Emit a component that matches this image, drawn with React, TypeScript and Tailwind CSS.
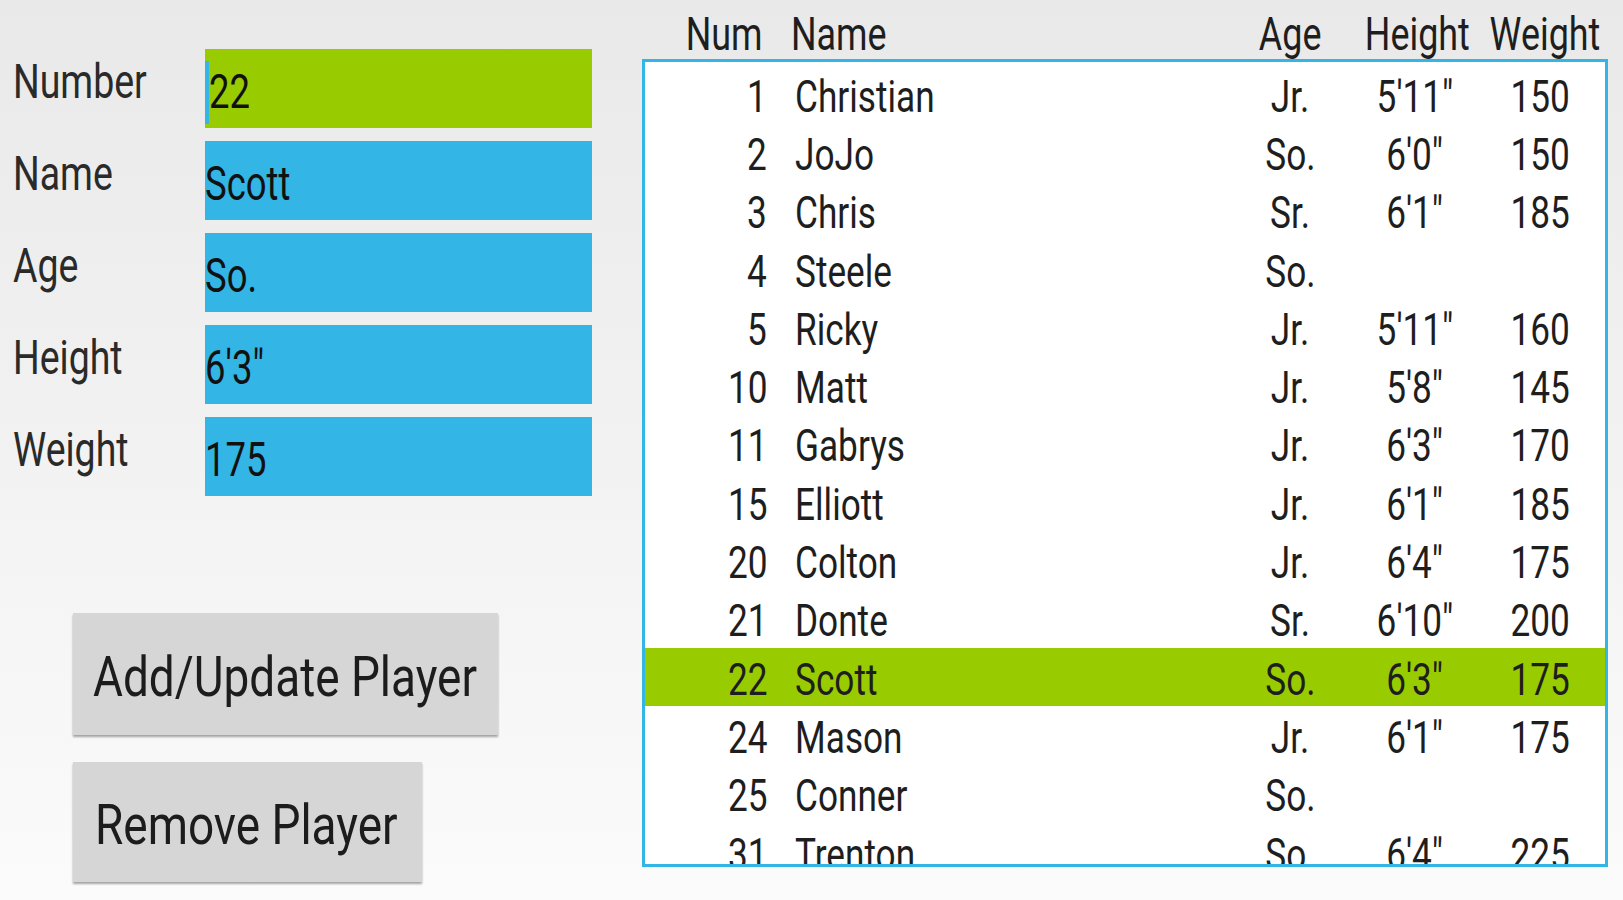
import React from "react";

type Player = { num: string; name: string; age: string; height: string; weight: string };

const players: Player[] = [
  { num: "1", name: "Christian", age: "Jr.", height: "5'11\"", weight: "150" },
  { num: "2", name: "JoJo", age: "So.", height: "6'0\"", weight: "150" },
  { num: "3", name: "Chris", age: "Sr.", height: "6'1\"", weight: "185" },
  { num: "4", name: "Steele", age: "So.", height: "", weight: "" },
  { num: "5", name: "Ricky", age: "Jr.", height: "5'11\"", weight: "160" },
  { num: "10", name: "Matt", age: "Jr.", height: "5'8\"", weight: "145" },
  { num: "11", name: "Gabrys", age: "Jr.", height: "6'3\"", weight: "170" },
  { num: "15", name: "Elliott", age: "Jr.", height: "6'1\"", weight: "185" },
  { num: "20", name: "Colton", age: "Jr.", height: "6'4\"", weight: "175" },
  { num: "21", name: "Donte", age: "Sr.", height: "6'10\"", weight: "200" },
  { num: "22", name: "Scott", age: "So.", height: "6'3\"", weight: "175" },
  { num: "24", name: "Mason", age: "Jr.", height: "6'1\"", weight: "175" },
  { num: "25", name: "Conner", age: "So.", height: "", weight: "" },
  { num: "31", name: "Trenton", age: "So.", height: "6'4\"", weight: "225" },
];

const fields = [
  { label: "Number", value: "22", active: true },
  { label: "Name", value: "Scott", active: false },
  { label: "Age", value: "So.", active: false },
  { label: "Height", value: "6'3\"", active: false },
  { label: "Weight", value: "175", active: false },
];

function Row({ p }: { p: Player }) {
  const sel = p.num === "22";
  return (
    <div
      className={`flex items-center h-[58.3px] shrink-0 whitespace-nowrap text-[44px] leading-none text-[#1e1e1e] ${
        sel ? "bg-[#99cc00]" : ""
      }`}
    >
      <div className="w-[122px] shrink-0 text-right pt-[5px]">
        <span className="inline-block origin-right scale-x-[0.8]">{p.num}</span>
      </div>
      <div className="w-[445px] shrink-0 ml-[28px] pt-[5px]">
        <span className="inline-block origin-left scale-x-[0.8]">{p.name}</span>
      </div>
      <div className="w-[100px] shrink-0 text-center pt-[5px]">
        <span className="inline-block origin-center scale-x-[0.8]">{p.age}</span>
      </div>
      <div className="w-[110px] shrink-0 ml-[20px] text-center pt-[5px]">
        <span className="inline-block origin-center scale-x-[0.8]">{p.height}</span>
      </div>
      <div className="w-[100px] shrink-0 ml-[20px] text-center pt-[5px]">
        <span className="inline-block origin-center scale-x-[0.8]">{p.weight}</span>
      </div>
    </div>
  );
}

export default function App() {
  return (
    <div className="w-[1623px] h-[900px] overflow-hidden flex bg-gradient-to-b from-[#e9e9e9] via-[#f2f2f2] to-[#fbfbfb] font-['Roboto',_'Liberation_Sans',_sans-serif]">
      {/* Left form */}
      <div className="w-[642px] shrink-0 flex flex-col pt-[49px] pl-[13px]">
        <div className="flex flex-col gap-[13px]">
          {fields.map((f) => (
            <div key={f.label} className="flex items-center h-[79px]">
              <div className="w-[192px] shrink-0 pb-[14px] text-[48px] leading-none text-[#2a2a2a] whitespace-nowrap">
                <span className="inline-block origin-left scale-x-[0.78]">{f.label}</span>
              </div>
              <div
                className={`w-[387px] h-[79px] flex items-center text-[48px] leading-none text-[#111] whitespace-nowrap ${
                  f.active ? "bg-[#99cc00]" : "bg-[#33b5e5]"
                }`}
              >
                {f.active && <div className="w-[4px] h-[63px] bg-[#33b5e5] shrink-0 mt-[8px]" />}
                <span className="inline-block origin-left scale-x-[0.76] pt-[6px]">{f.value}</span>
              </div>
            </div>
          ))}
        </div>
        <div className="ml-[60px] mt-[117px] flex flex-col items-start gap-[27px]">
          <div className="w-[425px] h-[122px] bg-[#d6d6d6] shadow-[0_2px_2px_rgba(0,0,0,0.35)] flex items-center pl-[20px] text-[56px] leading-none text-[#1c1c1c] whitespace-nowrap">
            <span className="inline-block origin-left scale-x-[0.82] pt-[6px]">Add/Update Player</span>
          </div>
          <div className="w-[349px] h-[120px] bg-[#d6d6d6] shadow-[0_2px_2px_rgba(0,0,0,0.35)] flex items-center pl-[22px] text-[56px] leading-none text-[#1c1c1c] whitespace-nowrap">
            <span className="inline-block origin-left scale-x-[0.82] pt-[6px]">Remove Player</span>
          </div>
        </div>
      </div>

      {/* Right table */}
      <div className="w-[966px] shrink-0 flex flex-col">
        <div className="h-[59px] flex items-center pl-[3px] pt-[8px] text-[46px] leading-none text-[#1e1e1e] whitespace-nowrap">
          <div className="w-[118px] shrink-0 text-right">
            <span className="inline-block origin-right scale-x-[0.78]">Num</span>
          </div>
          <div className="w-[449px] shrink-0 ml-[28px]">
            <span className="inline-block origin-left scale-x-[0.78]">Name</span>
          </div>
          <div className="w-[100px] shrink-0 text-center">
            <span className="inline-block origin-center scale-x-[0.78]">Age</span>
          </div>
          <div className="w-[110px] shrink-0 ml-[10px] text-center">
            <span className="inline-block origin-center scale-x-[0.78]">Height</span>
          </div>
          <div className="w-[110px] shrink-0 ml-[14px] text-center">
            <span className="inline-block origin-center scale-x-[0.78]">Weight</span>
          </div>
        </div>
        <div className="h-[808px] border-[3px] border-[#33b5e5] bg-white overflow-hidden pt-[3px] flex flex-col">
          {players.map((p) => (
            <Row key={p.num} p={p} />
          ))}
        </div>
      </div>
    </div>
  );
}
